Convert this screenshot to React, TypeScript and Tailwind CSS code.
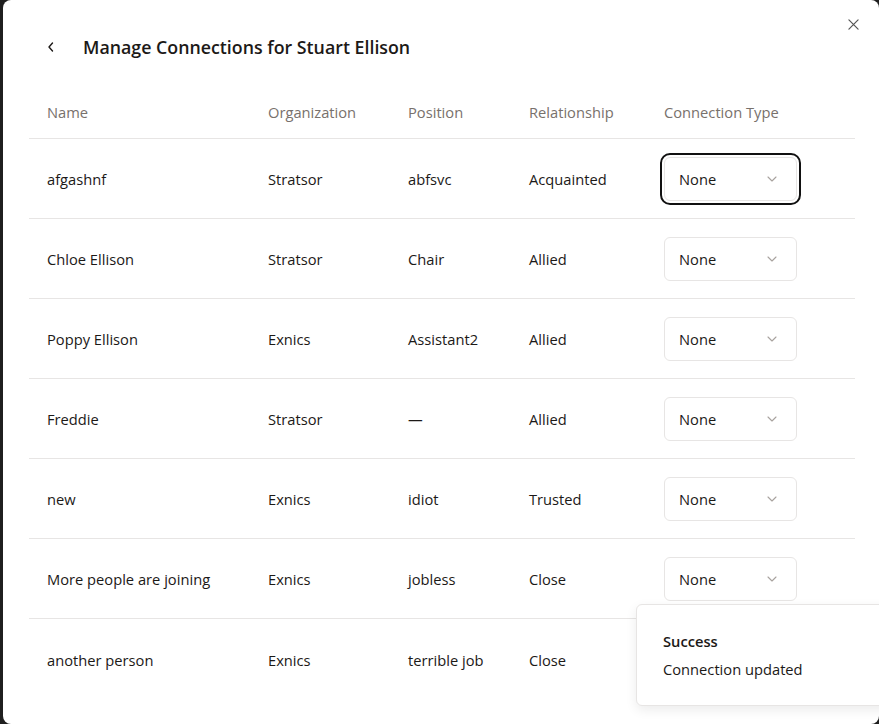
import React from "react";

const rows = [
  { name: "afgashnf", org: "Stratsor", pos: "abfsvc", rel: "Acquainted", focused: true },
  { name: "Chloe Ellison", org: "Stratsor", pos: "Chair", rel: "Allied" },
  { name: "Poppy Ellison", org: "Exnics", pos: "Assistant2", rel: "Allied" },
  { name: "Freddie", org: "Stratsor", pos: "—", rel: "Allied" },
  { name: "new", org: "Exnics", pos: "idiot", rel: "Trusted" },
  { name: "More people are joining", org: "Exnics", pos: "jobless", rel: "Close" },
  { name: "another person", org: "Exnics", pos: "terrible job", rel: "Close", noSelect: true },
];

function Chevron() {
  return (
    <svg width="10" height="6" viewBox="0 0 10 6" fill="none">
      <path d="M1 1l4 4 4-4" stroke="#a8a29e" strokeWidth="1.1" strokeLinecap="round" strokeLinejoin="round" />
    </svg>
  );
}

function Select({ focused }: { focused?: boolean }) {
  return (
    <div
      className={
        "flex h-[44px] w-[133px] items-center justify-between rounded-md border border-[#e7e5e4] bg-white pl-[14px] pr-[19px] text-[14.7px] text-[#1c1917] " +
        (focused ? "outline-2 outline-offset-2 outline-[#111]" : "")
      }
    >
      <span className="pt-[1px]">None</span>
      <Chevron />
    </div>
  );
}

export default function App() {
  return (
    <div
      className="relative flex h-[724px] w-[879px] overflow-hidden bg-[#1f1f1f]"
      style={{ fontFamily: '"Open Sans", "Noto Sans", sans-serif' }}
    >
      <div className="relative ml-[3px] flex h-[724px] flex-1 flex-col rounded-lg bg-white pl-[26px] pr-[24px] pt-[32px]">
        <button className="absolute right-[20px] top-[19px] text-[#555]">
          <svg width="11" height="11" viewBox="0 0 12 12" fill="none">
            <path d="M1 1l10 10M11 1L1 11" stroke="#555" strokeWidth="1.3" strokeLinecap="round" />
          </svg>
        </button>
        <div className="flex h-[30px] items-center">
          <span className="ml-[18px] flex w-[36px] items-center">
            <svg width="8" height="12" viewBox="0 0 8 12" fill="none">
              <path d="M5.5 2L2 6l3.5 4" stroke="#1c1917" strokeWidth="1.4" strokeLinecap="round" strokeLinejoin="round" />
            </svg>
          </span>
          <h1 className="text-[17.8px] font-semibold text-[#1c1917]">
            Manage Connections for Stuart Ellison
          </h1>
        </div>
        <div className="mt-[26px]">
          <div className="grid h-[51px] grid-cols-[221px_140px_121px_135px_209px] items-center border-b border-[#e7e5e4] text-[14.7px] font-medium text-[#78716c]">
            <div className="pl-[18px] pb-[1px]">Name</div>
            <div className="pl-[18px] pb-[1px]">Organization</div>
            <div className="pl-[18px] pb-[1px]">Position</div>
            <div className="pl-[18px] pb-[1px]">Relationship</div>
            <div className="pl-[18px] pb-[1px]">Connection Type</div>
          </div>
          {rows.map((r, i) => (
            <div
              key={i}
              className={
                "grid h-[80px] grid-cols-[221px_140px_121px_135px_209px] items-center text-[14.7px] text-[#1c1917] " +
                (i < rows.length - 1 ? "border-b border-[#e7e5e4]" : "")
              }
            >
              <div className="pl-[18px] pt-[2px]">{r.name}</div>
              <div className="pl-[18px] pt-[2px]">{r.org}</div>
              <div className="pl-[18px] pt-[2px]">{r.pos}</div>
              <div className="pl-[18px] pt-[2px]">{r.rel}</div>
              <div className="pl-[18px]">{r.noSelect ? null : <Select focused={r.focused} />}</div>
            </div>
          ))}
        </div>
      </div>
      <div className="absolute left-[636px] top-[604px] flex h-[102px] w-[280px] flex-col justify-center rounded-md border border-[#e7e5e4] bg-white pl-[26px] shadow-[0_4px_12px_rgba(0,0,0,0.08)]">
        <div className="text-[14.7px] font-semibold text-[#1c1917]">Success</div>
        <div className="mt-[5px] text-[14.7px] text-[#1c1917]">Connection updated</div>
      </div>
    </div>
  );
}
